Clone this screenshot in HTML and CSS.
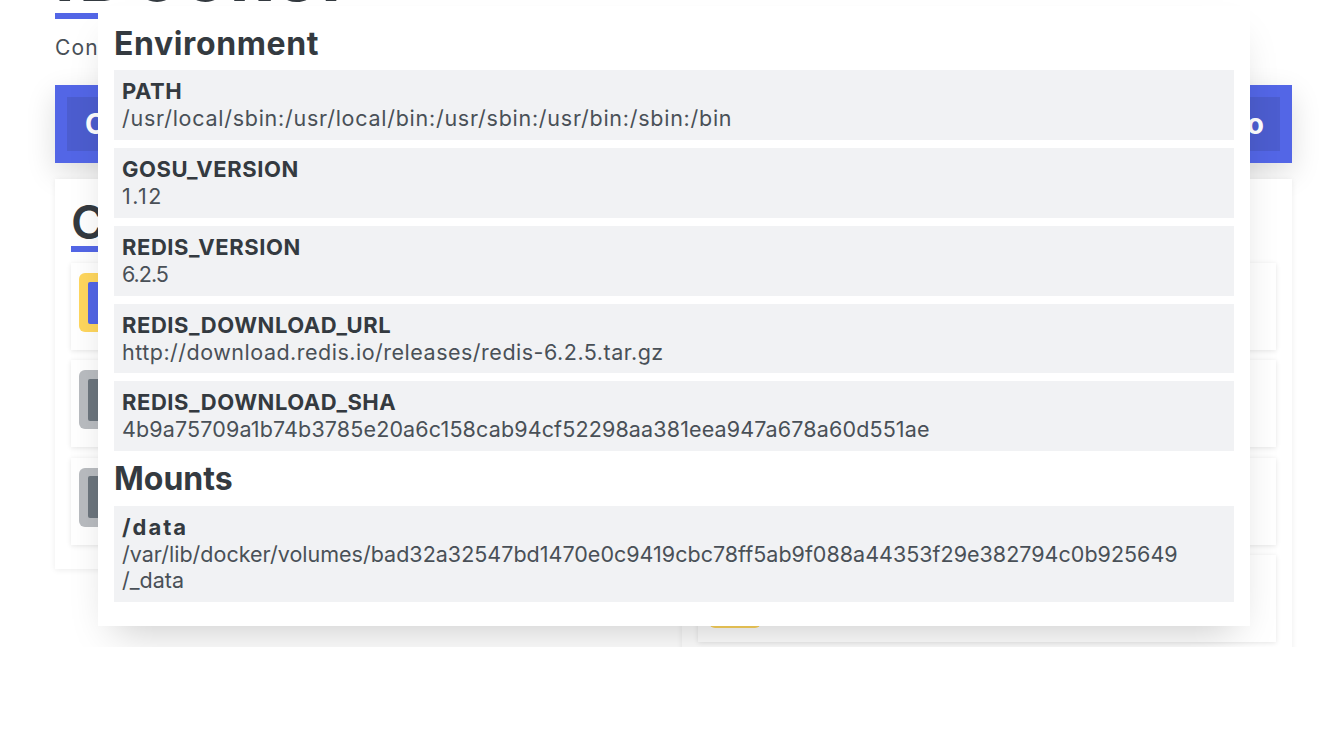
FILE: index.html
```html
<!DOCTYPE html>
<html lang="en">
<head>
<meta charset="utf-8">
<title>iDocker</title>
<link rel="stylesheet" href="styles.css">
</head>
<body>
<div class="page">
  <main class="container">
    <h1 class="title">iDocker</h1>
    <div class="rule"></div>
    <p class="subtitle">Containers</p>
    <nav class="bar">
      <div class="bar-inner"><span>Containers</span><span>Info</span></div>
    </nav>
    <div class="columns">
      <section class="card card-left">
        <h2 class="card-title">Containers</h2>
        <div class="rule rule-card"></div>
        <div class="item"><span class="icon icon-yellow"><span class="icon-core icon-core-blue"></span></span></div>
        <div class="item"><span class="icon icon-grey"><span class="icon-core icon-core-grey"></span></span></div>
        <div class="item"><span class="icon icon-grey"><span class="icon-core icon-core-grey"></span></span></div>
      </section>
      <section class="card">
        <h2 class="card-title">Images</h2>
        <div class="rule rule-card"></div>
        <div class="item"></div>
        <div class="item"></div>
        <div class="item"></div>
        <div class="item"><span class="icon icon-yellow icon-low"></span></div>
      </section>
    </div>
  </main>
  <aside class="modal">
    <h3 class="modal-heading">Environment</h3>
    <div class="kv"><strong>PATH</strong><span class="v-path">/usr/local/sbin:/usr/local/bin:/usr/sbin:/usr/bin:/sbin:/bin</span></div>
    <div class="kv"><strong>GOSU_VERSION</strong><span class="v-short">1.12</span></div>
    <div class="kv"><strong>REDIS_VERSION</strong><span class="v-tight">6.2.5</span></div>
    <div class="kv"><strong>REDIS_DOWNLOAD_URL</strong><span class="v-url">http://download.redis.io/releases/redis-6.2.5.tar.gz</span></div>
    <div class="kv"><strong>REDIS_DOWNLOAD_SHA</strong><span class="v-hash">4b9a75709a1b74b3785e20a6c158cab94cf52298aa381eea947a678a60d551ae</span></div>
    <h3 class="modal-heading">Mounts</h3>
    <div class="kv kv-mount"><strong>/data</strong><span class="v-mount">/var/lib/docker/volumes/bad32a32547bd1470e0c9419cbc78ff5ab9f088a44353f29e382794c0b925649<br>/_data</span></div>
  </aside>
</div>
</body>
</html>
```
FILE: styles.css
```css
* { box-sizing: border-box; }
html, body { margin: 0; background: #fff; }
body { font-family: Inter, "Noto Sans", sans-serif; color: #343a40; }
.page { position: relative; height: 647px; overflow: hidden; }
.container { padding: 0 43px 0 55px; }
.title {
  margin: -60px 0 0;
  height: 73px;
  font-size: 72px;
  line-height: 70px;
  font-weight: 700;
  letter-spacing: 4.2px;
}
.rule { width: 120px; height: 6px; background: #5366e6; }
.subtitle { margin: 17px 0 0; height: 49px; font-size: 21px; line-height: 24px; letter-spacing: 1.2px; color: #495057; }
.bar { background: #5366e6; padding: 12px; height: 78px; box-shadow: 0 10px 30px rgba(0,0,0,.14); }
.bar-inner {
  display: flex; justify-content: space-between; align-items: center;
  height: 54px; padding: 0 16px 0 18px;
  background: #4c5dcf; color: #fff; font-size: 28px; font-weight: 700;
}
.columns { display: grid; grid-template-columns: 1fr 1fr; gap: 16px; margin-top: 16px; align-items: start; }
.card { background: #fff; padding: 16px; box-shadow: 0 1px 6px rgba(0,0,0,.08); }
.card-left { height: 390px; }
.card-title { margin: 0; height: 51px; padding-top: 1px; font-size: 47px; line-height: 51px; font-weight: 600; }
.rule-card { margin-bottom: 11px; }
.item {
  display: flex; height: 87px; margin-bottom: 10.25px; padding: 10px 8px;
  background: #fff; box-shadow: 0 1px 5px rgba(0,0,0,.1);
}
.icon { display: flex; align-items: center; padding: 9px; width: 59px; height: 59px; border-radius: 6px; }
.icon-low { margin: 4px 0 0 3.5px; width: 52px; }
.icon-yellow { background: #ffd75e; }
.icon-grey { background: #b9bcc0; }
.icon-core { width: 100%; height: 42px; border-radius: 2px; }
.icon-core-blue { background: #5366e6; }
.icon-core-grey { background: #6c757d; }
.modal {
  position: absolute; left: 98px; top: 6px; width: 1152px; height: 620px;
  padding: 18px 16px 16px; background: #fff;
  box-shadow: 0 20px 40px -16px rgba(0,0,0,.22);
}
.modal-heading {
  margin: 0 0 8px; padding-top: 2px; font-size: 32px; line-height: 36.4px; font-weight: 700; letter-spacing: .6px; color: #343a40;
}
.kv + .modal-heading { margin-bottom: 8.7px; letter-spacing: 0; }
.kv {
  margin-bottom: 8px; padding: 8px; background: #f1f2f4;
  font-size: 21.5px; line-height: 26.875px; color: #495057;
}
.kv-mount { line-height: 26.5px; }
.kv strong { display: block; font-size: 22px; font-weight: 700; letter-spacing: .55px; color: #343a40; }
.kv-mount strong { letter-spacing: 2px; }
.kv span { display: block; }
.v-path { letter-spacing: .74px; }
.v-url { letter-spacing: .5px; }
.v-hash { letter-spacing: .14px; }
.v-mount { letter-spacing: .01px; }
.v-short { letter-spacing: 1.5px; }
.v-tight { letter-spacing: -1px; }
```
